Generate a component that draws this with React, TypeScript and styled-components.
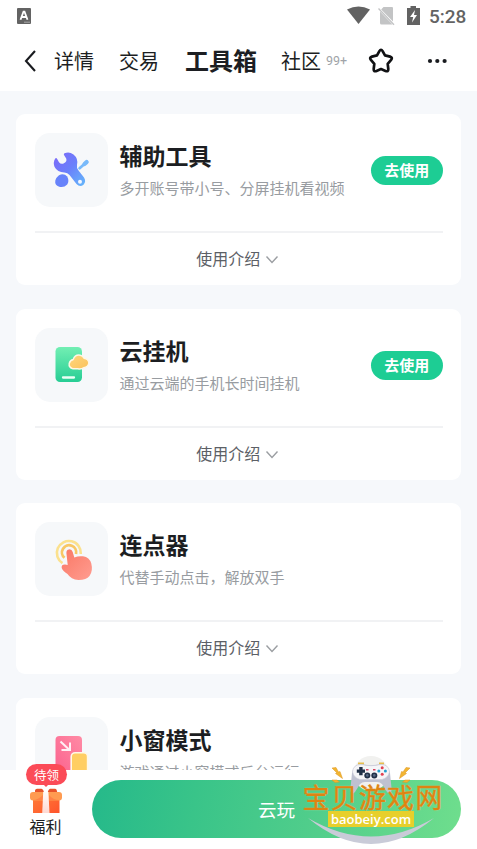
import React from "react";
import styled, { createGlobalStyle } from "styled-components";

const GlobalStyle = createGlobalStyle`
  * { box-sizing: border-box; }
  body {
    margin: 0;
    background: #f6f8fb;
    font-family: "Noto Sans CJK SC", "Noto Sans", sans-serif;
    color: #1c1e22;
  }
`;

const Screen = styled.div`
  position: relative;
  display: flex;
  flex-direction: column;
  width: 477px;
  height: 849px;
  overflow: hidden;
  background: #f6f8fb;
`;

const Header = styled.header`
  flex: none;
  height: 91px;
  background: #fff;
`;

const StatusBar = styled.div`
  display: flex;
  align-items: center;
  height: 32px;
  padding: 0 10px 0 17px;
`;

const StatusIcons = styled.svg`
  display: block;
  margin-left: auto;
`;

const Clock = styled.span`
  width: 38px;
  margin-left: 9px;
  padding-top: 1px;
  font: 500 19px/32px Roboto, sans-serif;
  color: #636363;
  white-space: nowrap;
`;

const Nav = styled.nav`
  display: flex;
  align-items: center;
  height: 58px;
  padding-left: 24px;
`;

const Tab = styled.span<{ $active?: boolean; $gap: number }>`
  margin-left: ${(p) => p.$gap}px;
  font-size: ${(p) => (p.$active ? 24 : 20)}px;
  font-weight: ${(p) => (p.$active ? 700 : 400)};
  line-height: ${(p) => (p.$active ? 56 : 58)}px;
  height: 58px;
  white-space: nowrap;
`;

const Count = styled.sup`
  align-self: flex-start;
  margin: 21px 0 0 5px;
  width: 22px;
  font: 400 12.5px/16px Roboto, sans-serif;
  color: #a0a3a8;
`;

const Star = styled.svg`
  margin-left: 20px;
`;

const More = styled.svg`
  margin-left: 32.5px;
`;

const List = styled.main`
  flex: 1;
  min-height: 0;
  overflow: hidden;
  display: flex;
  flex-direction: column;
  gap: 23.6px;
  padding: 23px 16px 0;
`;

const Card = styled.section`
  flex: none;
  height: 171px;
  padding: 0 18.5px 0 19px;
  border-radius: 9px;
  background: #fff;
`;

const CardTop = styled.div`
  display: flex;
  height: 119px;
  padding-top: 19px;
  border-bottom: 2px solid #f1f2f4;
`;

const IconTile = styled.div`
  flex: none;
  width: 73px;
  height: 74px;
  border-radius: 15px;
  background: #f6f8fa;

  svg {
    display: block;
  }
`;

const CardText = styled.div`
  flex: 1;
  min-width: 0;
  margin-left: 11.5px;
  white-space: nowrap;
`;

const Title = styled.h2`
  margin: 5px 0 0;
  font-size: 23px;
  font-weight: 700;
  line-height: 34px;
`;

const Description = styled.p`
  margin: 4px 0 0;
  font-size: 15px;
  line-height: 24px;
  color: #989ca1;
`;

const UseButton = styled.button`
  flex: none;
  width: 71.5px;
  height: 29px;
  margin: 23px 0 0;
  padding: 0 0 1px;
  border: 0;
  border-radius: 15px;
  background: #1dcd94;
  color: #fff;
  font: 700 15px/26px "Noto Sans CJK SC", sans-serif;
`;

const Intro = styled.div`
  display: flex;
  align-items: center;
  justify-content: center;
  gap: 5px;
  height: 50.5px;
  padding-right: 2px;
  font-size: 16px;
  color: #5c6066;

  svg {
    margin-top: 4px;
  }
`;

const BottomBar = styled.footer`
  flex: none;
  display: flex;
  height: 79px;
  padding: 10px 16px 0 0;
  background: #fff;
`;

const Welfare = styled.div`
  position: relative;
  width: 92px;
  padding: 5px 0 0 29px;
  font-size: 16px;
  line-height: 27px;

  svg {
    display: block;
  }
`;

const WelfareLabel = styled.div`
  margin-left: 0.5px;
`;

const Badge = styled.span`
  position: absolute;
  left: 26px;
  top: -16px;
  width: 41px;
  height: 21px;
  border-radius: 11px;
  background: #fb4b57;
  color: #fff;
  font-size: 12.5px;
  line-height: 21px;
  text-align: center;
`;

const PlayButton = styled.button`
  flex: 1;
  height: 58px;
  padding: 0;
  border: 0;
  border-radius: 29px;
  background: linear-gradient(100deg, #25b98a 0%, #39c489 28%, #52ce8b 62%, #6fde8d 100%);
  color: #fff;
  font: 400 18.5px/58px "Noto Sans CJK SC", sans-serif;
`;

const Watermark = styled.div`
  position: absolute;
  left: 296px;
  top: 750px;
  width: 152px;
  height: 99px;

  svg {
    position: absolute;
    inset: 0;
  }
`;

const SiteName = styled.div`
  position: absolute;
  left: 6.5px;
  top: 32px;
  font-size: 27px;
  font-weight: 400;
  line-height: 29px;
  letter-spacing: 1.2px;
  white-space: nowrap;
  color: #dd8412;
  -webkit-text-stroke: 0.4px #dd8412;
  text-shadow: 0 0 1px #ffe0a0;
`;

const SiteUrl = styled.div`
  position: absolute;
  left: 32px;
  top: 61px;
  width: 86px;
  height: 16px;
  background: #e7cf2b;
  color: #fff;
  font: 600 13px/16px "Open Sans", sans-serif;
  text-align: center;
`;

function ToolsIcon() {
  return (
    <svg width="73" height="74" viewBox="0 0 73 74">
      <defs>
        <linearGradient id="tool" x1="0" y1="0" x2="1" y2="1">
          <stop offset="0" stopColor="#7f68f8" />
          <stop offset=".5" stopColor="#6a80fb" />
          <stop offset="1" stopColor="#65b9fb" />
        </linearGradient>
      </defs>
      <path
        d="M29.5 20.3Q34 18 38.5 21.5Q43.5 25.5 42 32Q41.3 35 43.5 37.5L49 44.5Q51.5 48.5 48.5 51.7Q44.8 54.5 41.5 51L34.5 42Q32.5 39.6 29.5 39.4Q22.5 39.5 19.6 34Q17.8 29.5 20.2 25.6Q21.2 24.5 22.2 25.9L24 29.2Q26 31.8 29 30.2Q32.3 28.7 31.2 25.5L29 22.1Q28.4 20.9 29.5 20.3Z"
        fill="url(#tool)"
      />
      <circle cx="45" cy="48.8" r="2" fill="#f3f8ff" />
      <path d="M24 42.2Q29 40 32.2 43.5Q34.5 48 32.2 51.5Q29 55 24.2 53.8Q19.5 52.3 20.3 47.5Q21 44.5 24 42.2Z" fill="#6783fa" />
      <path d="M44.6 35.2 52 28.8" stroke="#79bafa" strokeWidth="2.8" strokeLinecap="round" />
      <path d="M49.5 31 51.6 29.1" stroke="#79bafa" strokeWidth="4.2" strokeLinecap="round" />
    </svg>
  );
}

function CloudPhoneIcon() {
  return (
    <svg width="73" height="74" viewBox="0 0 73 74">
      <defs>
        <linearGradient id="phone" x1="0" y1="0" x2="0" y2="1">
          <stop offset="0" stopColor="#72efb3" />
          <stop offset="1" stopColor="#27cd94" />
        </linearGradient>
        <linearGradient id="cloud" x1="0" y1="0" x2="1" y2="1">
          <stop offset="0" stopColor="#ffd67e" />
          <stop offset="1" stopColor="#fac25a" />
        </linearGradient>
      </defs>
      <rect x="20.5" y="19" width="26.5" height="35" rx="4.5" fill="url(#phone)" />
      <path d="M28 49.5H39" stroke="#ecfff5" strokeWidth="2.3" strokeLinecap="round" />
      <path
        d="M38 40.8Q33.5 39.5 34.2 35.5Q35 32.2 38.2 31.5Q40 26.3 45.2 27.2Q47.6 27.6 49 30.2Q53.7 30.7 53.8 35Q53.2 38.7 49 39.7Q46 41.6 43 40.8Z"
        fill="url(#cloud)"
        stroke="#fff7e5"
        strokeWidth="1.4"
      />
    </svg>
  );
}

function TapIcon() {
  return (
    <svg width="73" height="74" viewBox="0 0 73 74">
      <defs>
        <linearGradient id="hand" x1="0" y1="0" x2="1" y2="1">
          <stop offset="0" stopColor="#fa7764" />
          <stop offset="1" stopColor="#ff9d91" />
        </linearGradient>
      </defs>
      <path d="M27.5 41.2A12 12 0 1 1 45.8 32" fill="none" stroke="#fbe18e" strokeWidth="2.6" />
      <path d="M29.5 35.8A7.1 7.1 0 1 1 41 32" fill="none" stroke="#f8c765" strokeWidth="2.8" />
      <path
        d="M31.4 31Q31.3 27.6 34 27.4Q36.8 27.1 37.7 30L39.3 35.5Q43.5 33.7 48 34.3Q54.5 35.3 56.3 41.5Q58.2 49 54.5 54Q51.5 58 43.5 58Q36 57.5 32.5 52Q27.7 49 26.7 46Q26.2 42.5 30 42.6L32.7 43Z"
        fill="url(#hand)"
      />
    </svg>
  );
}

function WindowIcon() {
  return (
    <svg width="73" height="74" viewBox="0 0 73 74">
      <defs>
        <linearGradient id="pink" x1="0" y1="1" x2="1" y2="0">
          <stop offset="0" stopColor="#fb638e" />
          <stop offset="1" stopColor="#ff8ba5" />
        </linearGradient>
      </defs>
      <rect x="20.5" y="19" width="26.5" height="36" rx="4" fill="url(#pink)" />
      <path d="M25.5 24.5 34 32.5M35 25.5V33H26.5" fill="none" stroke="#fff0f4" strokeWidth="2" />
      <rect x="36.2" y="35.7" width="16.4" height="24" rx="4" fill="#ffce63" stroke="#fff8e8" strokeWidth="1.6" />
    </svg>
  );
}

function GiftIcon() {
  return (
    <svg width="34" height="28" viewBox="0 0 34 28">
      <defs>
        <linearGradient id="gift" x1="0" y1="0" x2="1" y2="1">
          <stop offset="0" stopColor="#ff7b38" />
          <stop offset="1" stopColor="#ff512b" />
        </linearGradient>
        <linearGradient id="ribbon" x1="0" y1="0" x2="0" y2="1">
          <stop offset="0" stopColor="#fffaf8" />
          <stop offset="1" stopColor="#ffd9d2" />
        </linearGradient>
      </defs>
      <path d="M6 8V5.5Q6.3 3.7 8 3.7H12.5Q14.5 4 15 8ZM18.5 8Q19.5 4 21 3.7H26Q28 3.8 28.3 8Z" fill="#e8532b" />
      <rect x="4" y="12" width="26.5" height="19" rx="3" fill="url(#gift)" />
      <rect x="1" y="7" width="32" height="8.5" rx="3" fill="#ff9b51" />
      <path d="M4 15H14V10Q9 15 4 15ZM20 10V15H30Q24 15 20 10Z" fill="#ff8247" />
      <path d="M14.2 7H19.4L20.5 28H13.2Z" fill="url(#ribbon)" />
      <path d="M15 0H19L17 2Z" fill="#fb4b57" />
    </svg>
  );
}

function WatermarkArt() {
  return (
    <svg width="152" height="99" viewBox="0 0 152 99">
      <circle cx="75" cy="23.5" r="17.5" fill="#f1f1ef" />
      <path d="M12 68Q75 105 138 68Q75 120 12 68Z" fill="#c9cbd8" />
      <g fill="#f2b531" stroke="#dc931e" strokeWidth=".5">
        <path d="M36 18 40 17.5 42.5 22 44 21.5 46.5 28.5 39.5 23.5 41 23Z" />
        <path d="M114 18 110 17.5 107 22 105.5 21.5 103.5 28.5 110.5 23.5 109 23Z" />
        <path d="M36 30 41 30 43.5 32 39 32.5Z" />
        <path d="M114 30 109 30 106.5 32 111 32.5Z" />
      </g>
      <path d="M62 13.6H68M83 13.6H88" stroke="#e7bd4c" strokeWidth="2" />
      <path d="M56 23Q57 14.2 66 14.2Q75 16.5 84 14.2Q93 14.2 94 23L95.5 38Q95.5 47 91 42L86 34Q84 32 81 32H69Q66 32 64 34L59 42Q54.5 47 54.5 38Z" fill="#bfc1d1" />
      <path d="M56.5 22Q57 14.5 65 14.5Q75 17 85 14.5Q93 14.5 93.5 22Q92 28 86 29.5H64Q58 28 56.5 22Z" fill="#f5f5f8" stroke="#c9cad6" strokeWidth=".6" />
      <path d="M63.2 17H66.6V19.4H69V22.8H66.6V25.2H63.2V22.8H60.8V19.4H63.2Z" fill="#213047" />
      <g fill="#213047"><circle cx="71.3" cy="25.4" r="3" /><circle cx="78.3" cy="25.4" r="3" /></g>
      <g fill="#566784"><circle cx="71.3" cy="25.4" r="1.3" /><circle cx="78.3" cy="25.4" r="1.3" /></g>
      <path d="M70 19.7H72.5M77 19.7H79.5" stroke="#d64361" strokeWidth="1.4" />
      <g fill="#e24252"><circle cx="86.2" cy="17.7" r="1.5" /><circle cx="86.2" cy="24.3" r="1.5" /></g>
      <g fill="#229fd1"><circle cx="82.8" cy="21" r="1.5" /><circle cx="89.4" cy="21" r="1.5" /></g>
    </svg>
  );
}

const tools = [
  { title: "辅助工具", text: "多开账号带小号、分屏挂机看视频", icon: <ToolsIcon />, usable: true },
  { title: "云挂机", text: "通过云端的手机长时间挂机", icon: <CloudPhoneIcon />, usable: true },
  { title: "连点器", text: "代替手动点击，解放双手", icon: <TapIcon />, usable: false },
  { title: "小窗模式", text: "游戏通过小窗模式后台运行", icon: <WindowIcon />, usable: false },
];

export default function App() {
  return (
    <>
      <GlobalStyle />
      <Screen>
        <Header>
          <StatusBar>
            <svg width="14" height="16" viewBox="0 0 14 16">
              <rect width="14" height="16" rx="1" fill="#636363" />
              <path d="m3.5 11.7 3-8h1l3 8M4.7 9h4.6" fill="none" stroke="#fff" strokeWidth="1.8" />
              <path d="M7 14.2H13" stroke="#aaa" strokeWidth="1" />
            </svg>
            <StatusIcons width="73" height="20" viewBox="0 0 73 20">
              <path d="M0 3.4Q11.5-2.6 23 3.4L11.5 18Z" fill="#626262" />
              <path d="M33 5.5 45.5 18.5H34.5Q33 18.5 33 17ZM36.5 1H45Q46 1 46 2V15.5L34.2 3.4Z" fill="#c3c4c5" />
              <path d="M31.5 2.5 47 18.8" stroke="#c3c4c5" strokeWidth="1.3" />
              <path d="M63.5 0H69V2H73V19H60V2H63.5Z" fill="#626262" />
              <path d="M68 4 63 11H66.2L65 16.5 70 9H67Z" fill="#fff" />
            </StatusIcons>
            <Clock>5:28</Clock>
          </StatusBar>
          <Nav>
            <svg width="13" height="24" viewBox="0 0 13 24">
              <path d="M11 2 2 12 11 22" fill="none" stroke="#191b1f" strokeWidth="2.1" />
            </svg>
            <Tab $gap={17}>详情</Tab>
            <Tab $gap={25}>交易</Tab>
            <Tab $gap={26} $active>工具箱</Tab>
            <Tab $gap={24}>社区</Tab>
            <Count>99+</Count>
            <Star width="26" height="26" viewBox="0 0 26 26">
              <path
                d="M11.4 3.1Q13 .4 14.6 3.1L17 7.4 22.1 8.6Q25 9.5 23.1 11.9L19.7 15.8 20.3 21Q20.4 24.1 17.5 22.9L13 21 8.5 22.9Q5.6 24.1 5.7 21L6.3 15.8 2.9 11.9Q1 9.5 3.9 8.6L9 7.4Z"
                fill="none"
                stroke="#101113"
                strokeWidth="2.7"
                strokeLinejoin="round"
              />
            </Star>
            <More width="20" height="6" viewBox="0 0 20 6" fill="#191b1f">
              <circle cx="3" cy="3" r="2.1" />
              <circle cx="10.3" cy="3" r="2.1" />
              <circle cx="17.6" cy="3" r="2.1" />
            </More>
          </Nav>
        </Header>
        <List>
          {tools.map((tool) => (
            <Card key={tool.title}>
              <CardTop>
                <IconTile>{tool.icon}</IconTile>
                <CardText>
                  <Title>{tool.title}</Title>
                  <Description>{tool.text}</Description>
                </CardText>
                {tool.usable && <UseButton>去使用</UseButton>}
              </CardTop>
              <Intro>
                使用介绍
                <svg width="14" height="10" viewBox="0 0 14 10">
                  <path d="M1.5 1.5 7 7.5 12.5 1.5" fill="none" stroke="#9b9ea2" strokeWidth="1.4" />
                </svg>
              </Intro>
            </Card>
          ))}
        </List>
        <BottomBar>
          <Welfare>
            <GiftIcon />
            <WelfareLabel>福利</WelfareLabel>
            <Badge>待领</Badge>
          </Welfare>
          <PlayButton>云玩</PlayButton>
        </BottomBar>
        <Watermark>
          <WatermarkArt />
          <SiteName>宝贝游戏网</SiteName>
          <SiteUrl>baobeiy.com</SiteUrl>
        </Watermark>
      </Screen>
    </>
  );
}
